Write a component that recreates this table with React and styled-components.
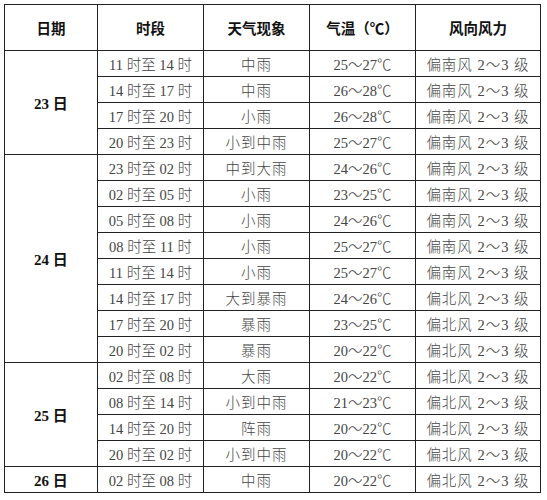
import React from "react";
import styled, { createGlobalStyle } from "styled-components";

const Global = createGlobalStyle`
  html, body { margin: 0; padding: 0; background: #fff; }
  body { padding: 4px; font-family: "Liberation Serif", "Noto Sans CJK SC", serif; }
`;

const Table = styled.table`
  border-collapse: collapse;
  width: 536px;
  table-layout: fixed;
  border: 1.5px solid #111;
`;

const Col = styled.col`
  width: ${(p) => p.$w}px;
`;

const Th = styled.th`
  height: 45px;
  border: 1px solid #222;
  font-size: 14.5px;
  font-weight: bold;
  color: #111;
  text-align: center;
  padding: 0;
`;

const Td = styled.td`
  height: 25px;
  border: 1px solid #222;
  border-top-width: ${(p) => (p.$groupStart ? "1.5px" : "1px")};
  font-size: 14.5px;
  font-weight: 300;
  color: #444;
  text-align: center;
  padding: 0;
  white-space: nowrap;
  letter-spacing: ${(p) => (p.$spaced ? "1px" : "0")};
`;

const DateCell = styled(Td)`
  font-weight: bold;
  color: #111;
  font-size: 15px;
`;

const groups = [
  {
    date: "23",
    rows: [
      ["11", "14", "中雨", "25～27℃", "南"],
      ["14", "17", "中雨", "26～28℃", "南"],
      ["17", "20", "小雨", "26～28℃", "南"],
      ["20", "23", "小到中雨", "25～27℃", "南"],
    ],
  },
  {
    date: "24",
    rows: [
      ["23", "02", "中到大雨", "24～26℃", "南"],
      ["02", "05", "小雨", "23～25℃", "南"],
      ["05", "08", "小雨", "24～26℃", "南"],
      ["08", "11", "小雨", "25～27℃", "南"],
      ["11", "14", "小雨", "25～27℃", "南"],
      ["14", "17", "大到暴雨", "24～26℃", "北"],
      ["17", "20", "暴雨", "23～25℃", "北"],
      ["20", "02", "暴雨", "20～22℃", "北"],
    ],
  },
  {
    date: "25",
    rows: [
      ["02", "08", "大雨", "20～22℃", "北"],
      ["08", "14", "小到中雨", "21～23℃", "北"],
      ["14", "20", "阵雨", "20～22℃", "北"],
      ["20", "02", "小到中雨", "20～22℃", "北"],
    ],
  },
  {
    date: "26",
    rows: [["02", "08", "中雨", "20～22℃", "北"]],
  },
];

export default function App() {
  return (
    <>
      <Global />
      <Table>
        <colgroup>
          <Col $w={93} />
          <Col $w={106} />
          <Col $w={106} />
          <Col $w={106} />
          <Col $w={125} />
        </colgroup>
        <thead>
          <tr>
            <Th>日期</Th>
            <Th>时段</Th>
            <Th>天气现象</Th>
            <Th>气温（℃）</Th>
            <Th>风向风力</Th>
          </tr>
        </thead>
        <tbody>
          {groups.map((g) =>
            g.rows.map((r, i) => (
              <tr key={g.date + i}>
                {i === 0 && (
                  <DateCell rowSpan={g.rows.length} $groupStart>
                    {g.date} 日
                  </DateCell>
                )}
                <Td $groupStart={i === 0}>{`${r[0]} 时至 ${r[1]} 时`}</Td>
                <Td $groupStart={i === 0} $spaced>{r[2]}</Td>
                <Td $groupStart={i === 0}>{r[3]}</Td>
                <Td $groupStart={i === 0} $spaced>{`偏${r[4]}风 2～3 级`}</Td>
              </tr>
            ))
          )}
        </tbody>
      </Table>
    </>
  );
}
